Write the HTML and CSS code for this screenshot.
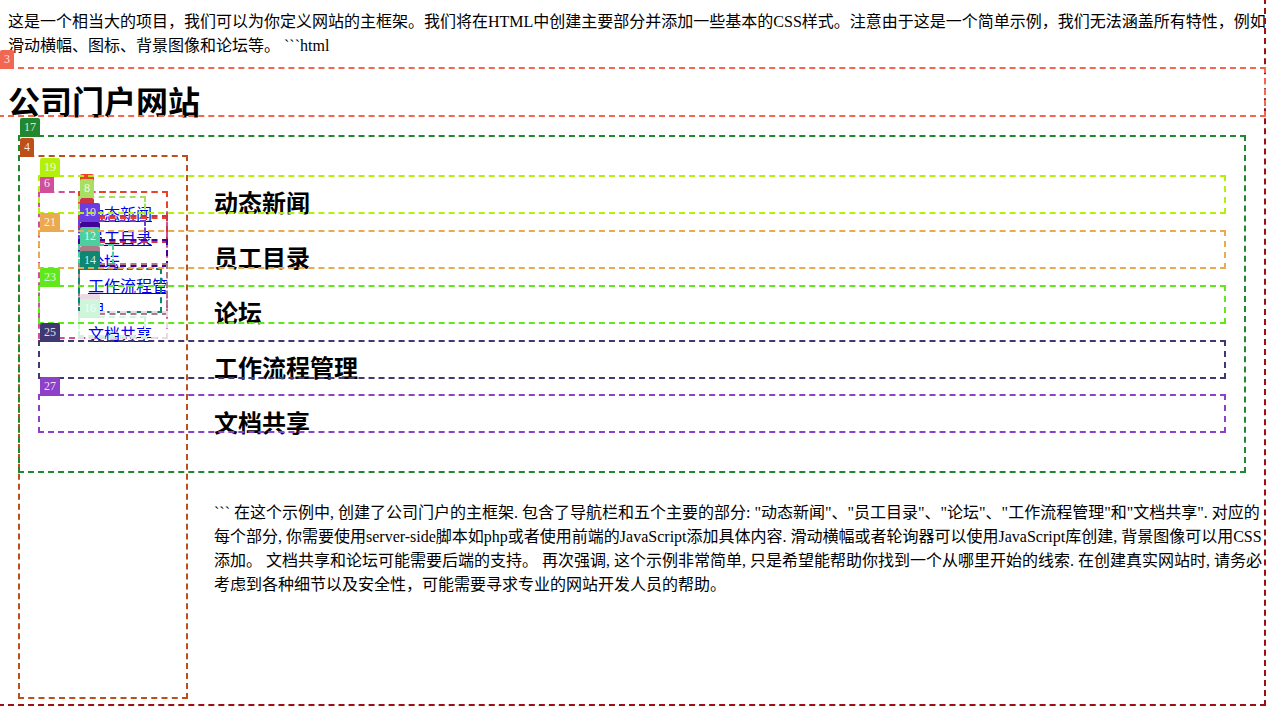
FILE: index.html
```html
<!DOCTYPE html>
<html lang="zh">
<head>
<meta charset="utf-8">
<title>公司门户网站</title>
<link rel="stylesheet" href="styles.css">
</head>
<body>
<div class="page">
  <p class="intro">这是一个相当大的项目，我们可以为你定义网站的主框架。我们将在HTML中创建主要部分并添加一些基本的CSS样式。注意由于这是一个简单示例，我们无法涵盖所有特性，例如滑动横幅、图标、背景图像和论坛等。 ```html</p>
  <header><h1>公司门户网站</h1></header>
  <div class="layout">
    <nav class="sidebar">
      <ul>
        <li><a href="#news">动态新闻</a></li>
        <li><a href="#staff">员工目录</a></li>
        <li><a href="#forum">论坛</a></li>
        <li><a href="#workflow">工作流程管理</a></li>
        <li><a href="#docs">文档共享</a></li>
      </ul>
    </nav>
    <div class="content">
      <main>
        <section id="news"><h2>动态新闻</h2></section>
        <section id="staff"><h2>员工目录</h2></section>
        <section id="forum"><h2>论坛</h2></section>
        <section id="workflow"><h2>工作流程管理</h2></section>
        <section id="docs"><h2>文档共享</h2></section>
      </main>
      <p class="note">``` 在这个示例中, 创建了公司门户的主框架. 包含了导航栏和五个主要的部分: "动态新闻"、"员工目录"、"论坛"、"工作流程管理"和"文档共享". 对应的每个部分, 你需要使用server-side脚本如php或者使用前端的JavaScript添加具体内容. 滑动横幅或者轮询器可以使用JavaScript库创建, 背景图像可以用CSS添加。 文档共享和论坛可能需要后端的支持。 再次强调, 这个示例非常简单, 只是希望能帮助你找到一个从哪里开始的线索. 在创建真实网站时, 请务必考虑到各种细节以及安全性，可能需要寻求专业的网站开发人员的帮助。</p>
    </div>
  </div>
  <div class="marks">
    <div class="mark m1"></div>
    <div class="mark m3"><span class="tag">3</span></div>
    <div class="mark m4"><span class="tag">4</span></div>
    <div class="mark m6"><span class="tag">6</span></div>
    <div class="mark m7"><span class="tag"></span></div>
    <div class="mark m8"><span class="tag">8</span></div>
    <div class="mark m9"><span class="tag"></span></div>
    <div class="mark m10"><span class="tag">10</span></div>
    <div class="mark m11"><span class="tag wide"></span></div>
    <div class="mark m12"><span class="tag">12</span></div>
    <div class="mark m13"><span class="tag wide"></span></div>
    <div class="mark m14"><span class="tag">14</span></div>
    <div class="mark m15"><span class="tag wide"></span></div>
    <div class="mark m16"><span class="tag">16</span></div>
    <div class="mark m17"><span class="tag">17</span></div>
    <div class="mark m19"><span class="tag">19</span></div>
    <div class="mark m21"><span class="tag">21</span></div>
    <div class="mark m23"><span class="tag">23</span></div>
    <div class="mark m25"><span class="tag">25</span></div>
    <div class="mark m27"><span class="tag">27</span></div>
  </div>
</div>
</body>
</html>
```
FILE: styles.css
```css
* { box-sizing: border-box; }

body {
  margin: 0;
  background: #fff;
  color: #000;
  font: 16px/24px "Liberation Serif", "Noto Sans CJK SC", serif;
}

.page {
  position: relative;
  margin-right: 14px;
  padding: 10px 0 109px 8px;
}

p, h1, h2, ul { margin: 0; }

h1 {
  margin-top: 21px;
  font-size: 32px;
  line-height: 48px;
}

.layout {
  display: flex;
  gap: 26px;
  padding-top: 52px;
}

.sidebar {
  flex: 0 0 180px;
  padding: 24px 20px 0 80px;
}

.sidebar ul {
  padding: 0;
  list-style: none;
}

a { color: #0000ee; }

.content { flex: 1; }

main {
  display: grid;
  gap: 20px;
  padding-top: 8px;
}

h2 {
  font-size: 24px;
  line-height: 35px;
}

.note { margin-top: 59px; }

/* Numbered outlines laid over the page */
.marks {
  position: absolute;
  inset: 0;
  overflow: hidden;
}

.mark {
  position: absolute;
  border: 2px dashed var(--c);
}

.tag {
  position: absolute;
  left: 0;
  top: -19px;
  height: 19px;
  min-width: 14px;
  padding: 2px 4px;
  border-radius: 2px;
  background: var(--c);
  color: rgba(255, 255, 255, 0.85);
  font-size: 12px;
  line-height: 15px;
}

.wide { min-width: 20px; }

.m1 { --c: #9b1013; left: -2px; right: 0; top: -2px; bottom: 0; }
.m3 { --c: #f26752; left: -2px; right: 0; top: 67px; height: 50px; }
.m4 { --c: #bd501a; left: 18px; width: 170px; top: 155px; height: 544px; }
.m6 { --c: #d04f9c; left: 38px; width: 130px; top: 191px; height: 148px; }
.m7 { --c: #eb4124; left: 78px; width: 90px; top: 191px; height: 28px; }
.m8 { --c: #a8df60; left: 78px; width: 68px; top: 196px; height: 21px; }
.m9 { --c: #cc3344; left: 78px; width: 90px; top: 215px; height: 28px; }
.m10 { --c: #6a3de0; left: 78px; width: 68px; top: 220px; height: 21px; }
.m11 { --c: #420494; left: 78px; width: 90px; top: 239px; height: 28px; }
.m12 { --c: #4dd0a0; left: 78px; width: 36px; top: 244px; height: 21px; }
.m13 { --c: #a97d88; left: 78px; width: 90px; top: 263px; height: 52px; }
.m14 { --c: #0d8672; left: 78px; width: 84px; top: 268px; height: 45px; }
.m15 { --c: #ecd9e4; left: 78px; width: 90px; top: 311px; height: 28px; }
.m16 { --c: #cdf6da; left: 78px; width: 68px; top: 316px; height: 21px; }
.m17 { --c: #208830; left: 18px; right: 20px; top: 135px; height: 338px; }
.m19, .m21, .m23, .m25, .m27 { left: 38px; right: 40px; height: 39px; }
.m19 { --c: #b4f00c; top: 175px; }
.m21 { --c: #e9aa50; top: 230px; }
.m23 { --c: #60e81c; top: 285px; }
.m25 { --c: #3f3872; top: 340px; }
.m27 { --c: #8d40c8; top: 394px; }
```
